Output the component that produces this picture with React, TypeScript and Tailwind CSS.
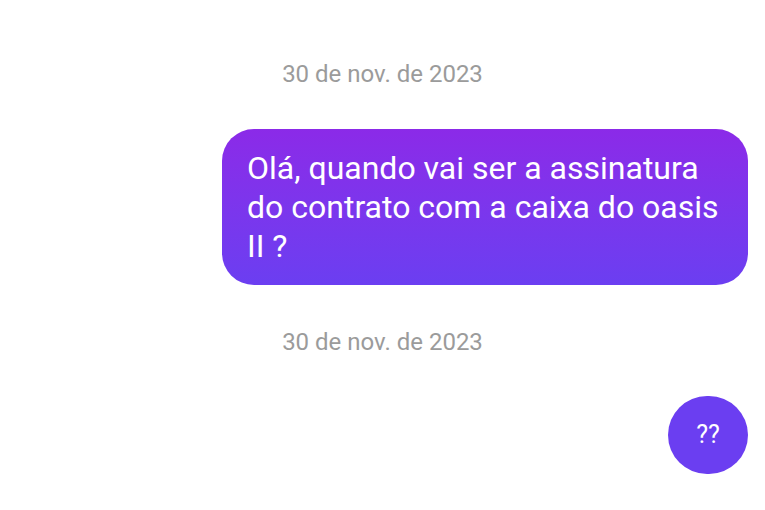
import React from "react";

const DateLabel = ({ text }: { text: string }) => (
  <p className="text-center text-[24px] leading-[28px] text-[#9b9b9b]">{text}</p>
);

const App = () => {
  return (
    <div
      className="w-[765px] h-[510px] bg-white flex flex-col overflow-hidden"
      style={{ fontFamily: "Roboto, 'Liberation Sans', sans-serif" }}
    >
      <div className="pt-[60px]">
        <DateLabel text="30 de nov. de 2023" />
      </div>

      <div className="flex justify-end pr-[17px] mt-[41px]">
        <div className="w-[526px] rounded-[32px] bg-gradient-to-b from-[#8b2ae8] to-[#6b3ef1] pl-[25px] pr-[10px] pt-[20px] pb-[19px] text-white text-[32px] leading-[39px]">
          Olá, quando vai ser a assinatura
          <br />
          do contrato com a caixa do oasis
          <br />
          II ?
        </div>
      </div>

      <div className="mt-[43px]">
        <DateLabel text="30 de nov. de 2023" />
      </div>

      <div className="flex justify-end pr-[17px] mt-[40px]">
        <div className="w-[80px] h-[78px] rounded-full bg-[#6b3ef1] flex items-center justify-center text-white text-[25px]">
          ??
        </div>
      </div>
    </div>
  );
};

export default App;
